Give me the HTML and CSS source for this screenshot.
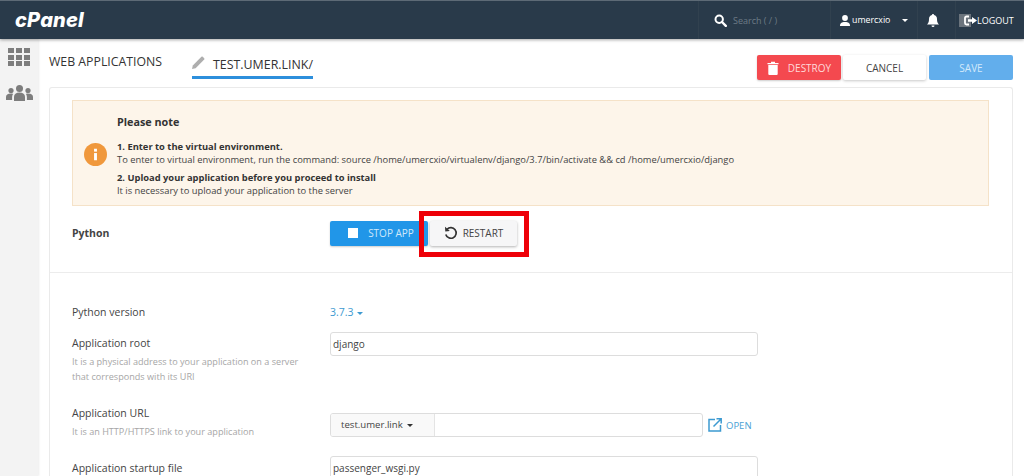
FILE: index.html
```html
<!DOCTYPE html>
<html lang="en">
<head>
  <meta charset="UTF-8" />
  <meta name="viewport" content="width=device-width, initial-scale=1.0"/>
  <title>Web Applications</title>
  <link rel="stylesheet" href="styles.css">
</head>
<body>

<header class="topbar">
  <div class="logo">cPanel</div>
  <div class="top-item search">
    <svg class="ico" width="13" height="13" viewBox="0 0 13 13"><circle cx="5.2" cy="5.2" r="3.7" fill="none" stroke="#fff" stroke-width="2"/><path d="M8 8l3.800 3.800" stroke="#fff" stroke-width="2.400" stroke-linecap="round"/></svg>
    <span class="search-text">Search ( / )</span>
  </div>
  <div class="top-item user">
    <svg width="10" height="11" viewBox="0 0 10 11"><circle cx="5" cy="3" r="2.900" fill="#fff"/><path d="M0 11c0-3 1.500-4 5-4s5 1 5 4z" fill="#fff"/></svg>
    <span>umercxio</span>
    <i class="caret caret-white"></i>
  </div>
  <div class="top-item bell">
    <svg width="12" height="13" viewBox="0 0 12 13"><path d="M6 0c.6 0 1 .4 1 1 2 .4 3 2 3 4 0 3 .6 4 2 5.500H0C1.400 9 2 8 2 5c0-2 1-3.600 3-4 0-.6.400-1 1-1z" fill="#fff"/><path d="M4.500 11.500h3a1.500 1.500 0 0 1-3 0z" fill="#fff"/></svg>
  </div>
  <div class="top-item logout">
    <svg width="18" height="13" viewBox="0 0 18 13"><rect width="12" height="13" fill="#6b747d"/><path d="M10 2.500H7.500A1.500 1.500 0 0 0 6 4v5a1.500 1.500 0 0 0 1.500 1.500H10" fill="none" stroke="#fff" stroke-width="1.800"/><path d="M9 5.200h4V3l5 3.500-5 3.500V7.800H9z" fill="#fff"/></svg>
    <span>LOGOUT</span>
  </div>
</header>

<div class="layout">
  <nav class="sidebar">
    <div class="grid-icon">
      <i></i><i></i><i></i><i></i><i></i><i></i><i></i><i></i><i></i>
    </div>
    <svg width="27" height="16" viewBox="0 0 27 16" fill="#7d7d7d"><circle cx="13.500" cy="3.500" r="3.500"/><path d="M8 16v-4c0-3 2-4.500 5.500-4.500S19 9 19 12v4z"/><circle cx="5" cy="5.500" r="2.600"/><path d="M0 15v-3c0-2 1.600-3.500 5-3.500 1 0 1.500.2 2 .4-.6 1-.9 2-.9 3.100v3z"/><circle cx="22" cy="5.500" r="2.600"/><path d="M27 15v-3c0-2-1.600-3.500-5-3.500-1 0-1.500.2-2 .4.600 1 .9 2 .9 3.100v3z"/></svg>
  </nav>

  <main class="content">
    <div class="page-head">
      <div class="crumb">WEB APPLICATIONS</div>
      <div class="tab">
        <svg width="13" height="13" viewBox="0 0 13 13" fill="#aeaeae"><path d="M0 13l.8-3.600L9.400.8a1 1 0 0 1 1.400 0l1.400 1.400a1 1 0 0 1 0 1.400L3.600 12.200z"/></svg>
        <span>TEST.UMER.LINK/</span>
      </div>
      <div class="head-actions">
        <button class="btn btn-destroy">
          <svg width="12" height="14" viewBox="0 0 11 14" fill="#fff"><path d="M0 2h3.500V.8h4V2H11v1.200H0z"/><path d="M.8 4h9.400v9a1 1 0 0 1-1 1h-7.400a1 1 0 0 1-1-1z"/></svg>
          <span>DESTROY</span>
        </button>
        <button class="btn btn-cancel">CANCEL</button>
        <button class="btn btn-save">SAVE</button>
      </div>
    </div>

    <section class="card">
      <div class="notice">
        <div class="notice-icon">
          <svg width="23" height="23" viewBox="0 0 24 24"><circle cx="12" cy="12" r="12" fill="#f0983c"/><rect x="10.500" y="6" width="3" height="3" fill="#fff"/><rect x="10.500" y="10.500" width="3" height="7.500" fill="#fff"/></svg>
        </div>
        <div class="notice-body">
          <div class="notice-title">Please note</div>
          <div class="notice-strong">1. Enter to the virtual environment.</div>
          <div>To enter to virtual environment, run the command: source /home/umercxio/virtualenv/django/3.7/bin/activate &amp;&amp; cd /home/umercxio/django</div>
          <div class="notice-strong second">2. Upload your application before you proceed to install</div>
          <div>It is necessary to upload your application to the server</div>
        </div>
      </div>

      <div class="app-row">
        <div class="app-name">Python</div>
        <div class="app-actions">
          <button class="btn btn-stop"><i class="stop-square"></i><span>STOP APP</span></button>
          <button class="btn btn-restart">
            <svg width="14" height="14" viewBox="0 0 14 14"><path d="M3 3.300A5.300 5.300 0 1 1 1.800 8.500" fill="none" stroke="#333" stroke-width="1.700"/><path d="M1 .8l.3 4.700 4.500-.6z" fill="#333"/></svg>
            <span>RESTART</span>
          </button>
          <div class="highlight"></div>
        </div>
      </div>

      <div class="form">
        <div class="field field-version">
          <div class="field-label">Python version</div>
          <div class="version">3.7.3 <i class="caret caret-blue"></i></div>
        </div>
        <div class="field field-root">
          <div class="field-text">
            <div class="field-label">Application root</div>
            <div class="field-help">It is a physical address to your application on a server that corresponds with its URI</div>
          </div>
          <div class="input">django</div>
        </div>
        <div class="field field-url">
          <div>
            <div class="field-label">Application URL</div>
            <div class="field-help">It is an HTTP/HTTPS link to your application</div>
          </div>
          <div class="url-line">
            <div class="input url-input">
              <div class="domain">test.umer.link <i class="caret caret-dark"></i></div>
            </div>
            <svg width="14" height="14" viewBox="0 0 14 14" fill="none" stroke="#3d9ad1" stroke-width="1.500"><path d="M7 1.500H1v11.500h11.500V7"/><path d="M5.500 8.500L13 1M8.500 .8H13.200V5.500"/></svg>
            <span class="open">OPEN</span>
          </div>
        </div>
        <div class="field field-file">
          <div class="field-text">
            <div class="field-label">Application startup file</div>
          </div>
          <div class="input">passenger_wsgi.py</div>
        </div>
      </div>
    </section>
  </main>
</div>

</body>
</html>
```

FILE: styles.css
```css
* { box-sizing: border-box; }

html, body { height: 100%; }

body {
  margin: 0; background: #fff; color: #333;
  font-family: "Open Sans", sans-serif;
  font-size: 10.5px;
  overflow: hidden;
}

button { font-family: inherit; border: none; cursor: pointer; }

/* top bar */
.topbar {
  display: flex; align-items: stretch;
  height: 39px; background: #293a4a; color: #fff;
  border-top: 1px solid #5d6a76;
  box-shadow: 0 1px 3px rgba(0,0,0,0.35);
  position: relative;
}

.logo {
  margin: 0 auto 0 15px; line-height: 38px;
  font-family: Inter, sans-serif; font-size: 20px; font-weight: 800; font-style: italic;
  letter-spacing: 0.2px;
}

.top-item {
  display: flex; align-items: center; gap: 4px;
  border-left: 1px solid #31414f;
}

.search { width: 132px; padding-left: 15px; gap: 6px; }
.search-text { color: #6d7a86; font-size: 9px; }
.user { width: 87px; padding-left: 9px; gap: 2px; font-size: 8.800px; }
.user .caret { margin-left: 10px; }
.bell { width: 38px; padding-left: 9px; }
.logout { width: 69px; padding-left: 3px; gap: 0; font-size: 9px; }

.caret {
  display: inline-block; width: 0; height: 0; vertical-align: middle;
  border-left: 3.500px solid transparent; border-right: 3.500px solid transparent;
  border-top: 3.500px solid #333;
}
.caret-white { border-top-color: #fff; }
.caret-blue { border-top-color: #3d9ad1; margin-left: 1px; }
.caret-dark { border-top-color: #333; margin-left: 2px; }

/* main area */
.layout { display: flex; height: 437px; }

.sidebar {
  width: 38px; flex: none; background: #f3f3f3;
  display: flex; flex-direction: column; align-items: center;
  padding-top: 9px; gap: 19px;
  box-shadow: 1px 0 2px rgba(0,0,0,0.08);
}

.grid-icon { display: grid; grid-template-columns: repeat(3, 6px); grid-auto-rows: 5px; gap: 1.500px 2px; }
.grid-icon i { background: #7d7d7d; }

.content { flex: 1; padding: 0 11px 0 11px; min-width: 0; }

.page-head { display: flex; height: 48px; align-items: flex-start; }

.crumb { font-size: 12.300px; color: #333; margin-top: 14px; width: 143px; }

.tab {
  display: flex; align-items: center; gap: 8px;
  height: 40px; padding-top: 13px;
  font-size: 12.400px; color: #333; width: 121px;
  border-bottom: 3px solid #2d8fdc;
}
.tab svg { flex: none; margin-top: -3px; }

.head-actions { display: flex; margin-left: auto; margin-top: 16px; gap: 2px; }

.btn {
  height: 25px; border-radius: 2px; font-size: 10px;
  display: flex; align-items: center; justify-content: center;
}

.btn-destroy { width: 84px; background: #f4494f; color: #ffd9da; gap: 9px; box-shadow: 0 1px 2px rgba(0,0,0,0.2); }
.btn-cancel { width: 83px; background: #fff; color: #444; box-shadow: 0 1px 3px rgba(0,0,0,0.22); }
.btn-save { width: 84px; background: #62aeec; color: #d3e9fa; margin-left: 1px; }

.card {
  border: 1px solid #eaeaea; border-bottom: none; border-radius: 3px 3px 0 0;
  padding-top: 12px; height: 389px; overflow: hidden;
}

.notice {
  display: flex; align-items: center;
  margin: 0 23px 0 22px; height: 106px;
  background: #fdf5ea; border: 1px solid #f5e2c8;
  padding-left: 11px;
}

.notice-icon { width: 33px; flex: none; display: flex; margin-top: 2px; }

.notice-body { align-self: flex-start; padding-top: 14px; line-height: 13px; font-size: 9.350px; color: #444; }
.notice-title { font-size: 10.800px; font-weight: 700; color: #333; margin-bottom: 12px; }
.notice-strong { font-weight: 700; color: #333; }
.notice-strong.second { margin-top: 5px; }

.app-row {
  display: flex; align-items: center;
  height: 67px; padding: 0 0 12px 22px;
  border-bottom: 1px solid #ececec;
}

.app-name { width: 258px; font-weight: 700; font-size: 10.500px; color: #444; }

.app-actions { display: flex; position: relative; gap: 2px; }

.btn-stop { width: 98px; background: #2196e8; color: #cfe8fa; gap: 10px; padding-left: 10px; box-shadow: 0 1px 2px rgba(0,0,0,0.2); }
.stop-square { width: 10px; height: 10px; background: #fff; }
.btn-restart { width: 87px; background: #f6f6f7; color: #444; gap: 5px; box-shadow: 0 1px 3px rgba(0,0,0,0.3); }

.highlight {
  position: absolute; left: 89px; top: -10px;
  width: 110px; height: 46px;
  border: 5px solid #ee0008;
}

/* form */
.form { padding: 32px 0 0 22px; }

.field { display: grid; grid-template-columns: 258px 428px; align-items: start; }
.field-text { padding-top: 4px; }
.field-label { font-size: 10.500px; color: #444; line-height: 14px; }
.field-help { font-size: 9.100px; color: #a6a6a6; line-height: 14.500px; margin-top: 5px; width: 240px; }

.field-version { height: 27px; }
.field-root { height: 74px; }
.field-url { height: 50px; }
.field-file { height: 30px; }
.field-file .field-text { padding-top: 5px; }

.version { color: #3d9ad1; font-size: 10.500px; line-height: 14px; }

.input {
  height: 24px; border: 1px solid #ddd; border-radius: 3px;
  padding-left: 2px; line-height: 22px; font-size: 10px; color: #444;
  background: #fff;
}

.url-line { display: flex; align-items: center; gap: 5px; margin-top: 7px; }
.url-input { width: 373px; padding-left: 0; flex: none; overflow: hidden; }
.domain { width: 104px; height: 22px; padding-left: 10px; font-size: 9.600px; background: #f9f9f9; border-right: 1px solid #e4e4e4; color: #444; }
.open { color: #4a9fd4; font-size: 9.500px; margin-left: -1px; }
```
